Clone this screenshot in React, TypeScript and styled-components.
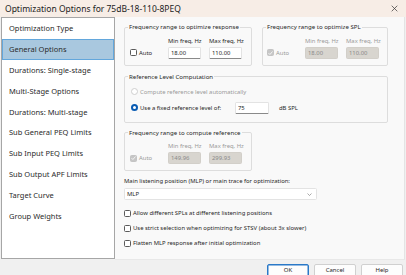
import React from 'react';
import styled, { createGlobalStyle } from 'styled-components';

const FONT = `"Noto Sans", "Open Sans", sans-serif`;

const GlobalStyle = createGlobalStyle`
  html, body {
    margin: 0;
    padding: 0;
    background: #f0f0f0;
  }
  #root {
    width: 406px;
    height: 275px;
    overflow: hidden;
  }
`;

const Window = styled.div`
  width: 406px;
  height: 275px;
  display: flex;
  flex-direction: column;
  background: #f0f0f0;
  color: #262626;
  font-family: ${FONT};
`;

const TitleBar = styled.div`
  height: 17px;
  flex: none;
  display: flex;
  align-items: center;
  justify-content: space-between;
  padding: 0 8px 0 5px;
  box-sizing: border-box;
  background: #f7ede6;
`;

const Title = styled.div`
  font-size: 8.5px;
  line-height: 17px;
  color: #222222;
  white-space: nowrap;
`;

const CloseIcon = styled.svg`
  width: 7px;
  height: 7px;
`;

const Body = styled.div`
  display: flex;
  height: 243px;
  flex: none;
`;

const NavList = styled.ul`
  list-style: none;
  margin: 0 0 1px 1px;
  padding: 0;
  width: 114px;
  box-sizing: border-box;
  border: 1px solid #a6a6a6;
  background: #ffffff;
`;

const NavItem = styled.li<{ $selected?: boolean }>`
  height: 20.8px;
  box-sizing: border-box;
  display: flex;
  align-items: center;
  padding-left: 6px;
  font-size: 7.5px;
  white-space: nowrap;
  color: #2a2a2a;
  border: 1px solid ${({ $selected }) => ($selected ? '#63a7dc' : 'transparent')};
  background: ${({ $selected }) => ($selected ? '#a9c8df' : 'transparent')};
`;

const Page = styled.div`
  flex: 1;
  margin-right: 1px;
  background: #f9f9f9;
  border-right: 1px solid #e4e4e4;
  border-bottom: 1px solid #e8e8e8;
  padding: 5px 0 0 9px;
  box-sizing: border-box;
  display: flex;
  flex-direction: column;
  font-size: 5.9px;
`;

const Row = styled.div`
  display: flex;
  gap: 10px;
`;

const GroupBox = styled.fieldset<{ $width: number; $top?: number }>`
  margin: ${({ $top }) => $top ?? 0}px 0 0 0;
  padding: 0;
  width: ${({ $width }) => $width}px;
  min-width: 0;
  box-sizing: border-box;
  border: 1px solid #dddddd;
  border-radius: 2px;
`;

const Legend = styled.legend`
  font-size: 6.1px;
  line-height: 10px;
  padding: 0 1px;
  margin-left: 3px;
  color: #262626;
  white-space: nowrap;
`;

const FreqContent = styled.div<{ $left: number }>`
  display: flex;
  align-items: flex-end;
  padding: 3.5px 0 6px ${({ $left }) => $left}px;
`;

const AutoBlock = styled.div`
  width: 38px;
  height: 12px;
  display: flex;
  align-items: center;
`;

const FreqColumn = styled.div`
  width: 33px;
  display: flex;
  flex-direction: column;
  gap: 1px;
  & + & {
    margin-left: 8px;
  }
`;

const SmallLabel = styled.span<{ $disabled?: boolean }>`
  font-size: 5.9px;
  line-height: 10px;
  white-space: nowrap;
  color: ${({ $disabled }) => ($disabled ? '#9a9a9a' : '#262626')};
`;

const TextBox = styled.input<{ $width?: number }>`
  width: ${({ $width }) => $width ?? 33}px;
  height: 12px;
  box-sizing: border-box;
  margin: 0;
  padding: 0 2px;
  font-family: ${FONT};
  font-size: 5.9px;
  color: #262626;
  background: #ffffff;
  border: 1px solid #e3e3e3;
  border-bottom-color: #8a8a8a;
  border-radius: 1.5px;
  outline: none;

  &:disabled {
    background: #d8d5cf;
    color: #8a8a8a;
    border-color: #d2cfc9;
  }
`;

const CheckRow = styled.div<{ $disabled?: boolean }>`
  display: flex;
  align-items: center;
  gap: 2px;
  height: 12px;
  white-space: nowrap;
  color: ${({ $disabled }) => ($disabled ? '#9a9a9a' : '#262626')};
`;

const CheckBox = styled.span<{ $checked?: boolean; $disabled?: boolean }>`
  width: 7px;
  height: 7px;
  box-sizing: border-box;
  flex: none;
  border-radius: 1.5px;
  border: 1px solid ${({ $disabled }) => ($disabled ? '#c4c4c4' : '#5a5a5a')};
  background: ${({ $checked, $disabled }) =>
    $checked ? ($disabled ? '#c6c6c6' : '#0067c0') : '#ffffff'};
  display: flex;
  align-items: center;
  justify-content: center;
`;

const RadioContent = styled.div`
  display: flex;
  flex-direction: column;
  gap: 4px;
  padding: 4px 0 8px 6px;
`;

const Radio = styled.span<{ $checked?: boolean; $disabled?: boolean }>`
  width: 7px;
  height: 7px;
  box-sizing: border-box;
  flex: none;
  border-radius: 50%;
  border: ${({ $checked, $disabled }) =>
    $checked ? '2px solid #0a5cb3' : `1px solid ${$disabled ? '#cfcfcf' : '#5a5a5a'}`};
  background: #ffffff;
`;

const FixedLabel = styled.div`
  width: 102px;
  display: flex;
  align-items: center;
  gap: 2px;
`;

const Unit = styled.span`
  margin-left: 8px;
`;

const FieldLabel = styled.div`
  margin-top: 5px;
  line-height: 10px;
  white-space: nowrap;
`;

const Select = styled.div`
  margin-top: 2px;
  width: 193px;
  height: 12px;
  box-sizing: border-box;
  background: #ffffff;
  border: 1px solid #e3e3e3;
  border-radius: 1.5px;
  display: flex;
  align-items: center;
  justify-content: space-between;
  padding: 0 4px 0 2px;
`;

const Chevron = styled.svg`
  width: 5px;
  height: 3px;
`;

const Options = styled.div`
  margin-top: 7px;
  display: flex;
  flex-direction: column;
  gap: 3px;
`;

const ButtonBar = styled.div`
  flex: 1;
  display: flex;
  justify-content: flex-end;
  align-items: flex-start;
  gap: 5px;
  padding: 4px 3px 0 0;
`;

const Button = styled.button<{ $primary?: boolean }>`
  width: 42px;
  height: 14px;
  margin: 0;
  padding: 0 0 2px;
  box-sizing: border-box;
  font-family: ${FONT};
  font-size: 6px;
  color: #262626;
  background: #fdfdfd;
  border: 1px solid ${({ $primary }) => ($primary ? '#2a79c8' : '#d0d0d0')};
  box-shadow: ${({ $primary }) => ($primary ? 'inset 0 0 0 0.5px #2a79c8' : 'none')};
  border-radius: 2px;
`;

const navItems = [
  'Optimization Type',
  'General Options',
  'Durations: Single-stage',
  'Multi-Stage Options',
  'Durations: Multi-stage',
  'Sub General PEQ Limits',
  'Sub Input PEQ Limits',
  'Sub Output APF Limits',
  'Target Curve',
  'Group Weights',
];

const Check = ({ checked, disabled }: { checked?: boolean; disabled?: boolean }) => (
  <CheckBox $checked={checked} $disabled={disabled}>
    {checked && (
      <svg width="5" height="4" viewBox="0 0 10 8">
        <path d="M1 4.2 L3.8 7 L9 1" fill="none" stroke="#ffffff" strokeWidth="1.6" />
      </svg>
    )}
  </CheckBox>
);

const FreqGroup = ({
  title,
  width,
  top,
  left,
  min,
  max,
  disabled,
}: {
  title: string;
  width: number;
  top?: number;
  left: number;
  min: string;
  max: string;
  disabled?: boolean;
}) => (
  <GroupBox $width={width} $top={top}>
    <Legend>{title}</Legend>
    <FreqContent $left={left}>
      <AutoBlock>
        <CheckRow $disabled={disabled}>
          <Check checked={disabled} disabled={disabled} />
          Auto
        </CheckRow>
      </AutoBlock>
      <FreqColumn>
        <SmallLabel $disabled={disabled}>Min freq, Hz</SmallLabel>
        <TextBox readOnly disabled={disabled} value={min} />
      </FreqColumn>
      <FreqColumn>
        <SmallLabel $disabled={disabled}>Max freq, Hz</SmallLabel>
        <TextBox readOnly disabled={disabled} value={max} />
      </FreqColumn>
    </FreqContent>
  </GroupBox>
);

export default function App() {
  return (
    <>
      <GlobalStyle />
      <Window>
        <TitleBar>
          <Title>Optimization Options for 75dB-18-110-8PEQ</Title>
          <CloseIcon viewBox="0 0 10 10">
            <path d="M1 1 L9 9 M9 1 L1 9" stroke="#333" strokeWidth="1" />
          </CloseIcon>
        </TitleBar>
        <Body>
          <NavList>
            {navItems.map((item) => (
              <NavItem key={item} $selected={item === 'General Options'}>
                {item}
              </NavItem>
            ))}
          </NavList>
          <Page>
            <Row>
              <FreqGroup title="Frequency range to optimize response" width={128} left={5} min="18.00" max="110.00" />
              <FreqGroup title="Frequency range to optimize SPL" width={126} left={4} min="18.00" max="110.00" disabled />
            </Row>
            <GroupBox $width={264} $top={6}>
              <Legend>Reference Level Computation</Legend>
              <RadioContent>
                <CheckRow $disabled>
                  <Radio $disabled />
                  Compute reference level automatically
                </CheckRow>
                <CheckRow>
                  <FixedLabel>
                    <Radio $checked />
                    Use a fixed reference level of:
                  </FixedLabel>
                  <TextBox readOnly value="75" $width={34} />
                  <Unit>dB SPL</Unit>
                </CheckRow>
              </RadioContent>
            </GroupBox>
            <FreqGroup title="Frequency range to compute reference" width={128} top={5} left={5} min="149.96" max="299.93" disabled />
            <FieldLabel>Main listening position (MLP) or main trace for optimization:</FieldLabel>
            <Select>
              <span>MLP</span>
              <Chevron viewBox="0 0 10 6">
                <path d="M1 1 L5 5 L9 1" fill="none" stroke="#555" strokeWidth="1" />
              </Chevron>
            </Select>
            <Options>
              <CheckRow>
                <Check />
                Allow different SPLs at different listening positions
              </CheckRow>
              <CheckRow>
                <Check />
                Use strict selection when optimizing for STSV (about 3x slower)
              </CheckRow>
              <CheckRow>
                <Check />
                Flatten MLP response after initial optimization
              </CheckRow>
            </Options>
          </Page>
        </Body>
        <ButtonBar>
          <Button $primary>OK</Button>
          <Button>Cancel</Button>
          <Button>Help</Button>
        </ButtonBar>
      </Window>
    </>
  );
}
